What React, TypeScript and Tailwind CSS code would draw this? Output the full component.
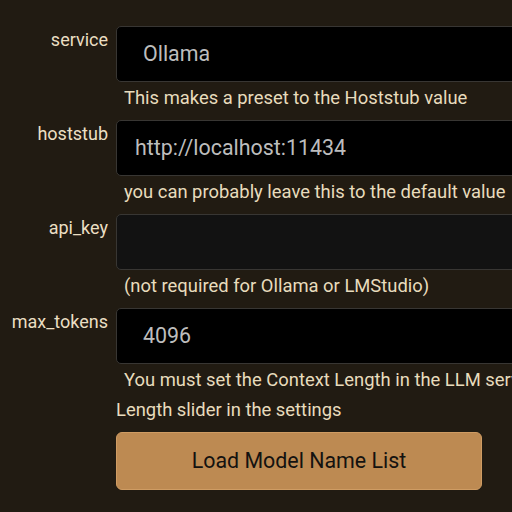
import React from "react";

const font = { fontFamily: "Roboto, 'Noto Sans', sans-serif" };

function Row({
  label,
  value,
  dark = true,
  padLeft = "pl-[26px]",
  children,
}: {
  label: string;
  value?: string;
  dark?: boolean;
  padLeft?: string;
  children: React.ReactNode;
}) {
  return (
    <div className="flex">
      <div className="w-[108px] shrink-0 text-right text-[18px] leading-[28px] text-[#ebdfc3]">
        {label}
      </div>
      <div className="ml-2 w-[600px] shrink-0">
        <div
          className={`h-[56px] rounded-[5px] border-[1.5px] border-[#383633] flex items-center ${padLeft} text-[21.4px] text-[#bdbdbd] ${
            dark ? "bg-black" : "bg-[#121212]"
          }`}
        >
          {value}
        </div>
        <div className="pt-[1px] text-[18.4px] leading-[30px] text-[#e8dcbd] indent-2">
          {children}
        </div>
      </div>
    </div>
  );
}

export default function App() {
  return (
    <div
      className="w-[512px] h-[512px] overflow-hidden bg-[#211b12]"
      style={font}
    >
      <div className="flex flex-col gap-[7px] pt-[26px] w-[760px]">
        <Row label="service" value="Ollama">
          This makes a preset to the Hoststub value
        </Row>
        <Row label="hoststub" value="http://localhost:11434" padLeft="pl-[18px]">
          you can probably leave this to the default value
        </Row>
        <Row label="api_key" value="" dark={false}>
          (not required for Ollama or LMStudio)
        </Row>
        <Row label="max_tokens" value="4096">
          You must set the Context Length in the LLM server to match the Context
          <br />
          Length slider in the settings
        </Row>
        <div className="flex">
          <div className="w-[108px] shrink-0" />
          <button className="ml-2 w-[366px] h-[58px] rounded-[6px] border border-[#cf9c63] bg-[#bd8a52] text-[21.4px] text-[#141210]">
            Load Model Name List
          </button>
        </div>
      </div>
    </div>
  );
}
